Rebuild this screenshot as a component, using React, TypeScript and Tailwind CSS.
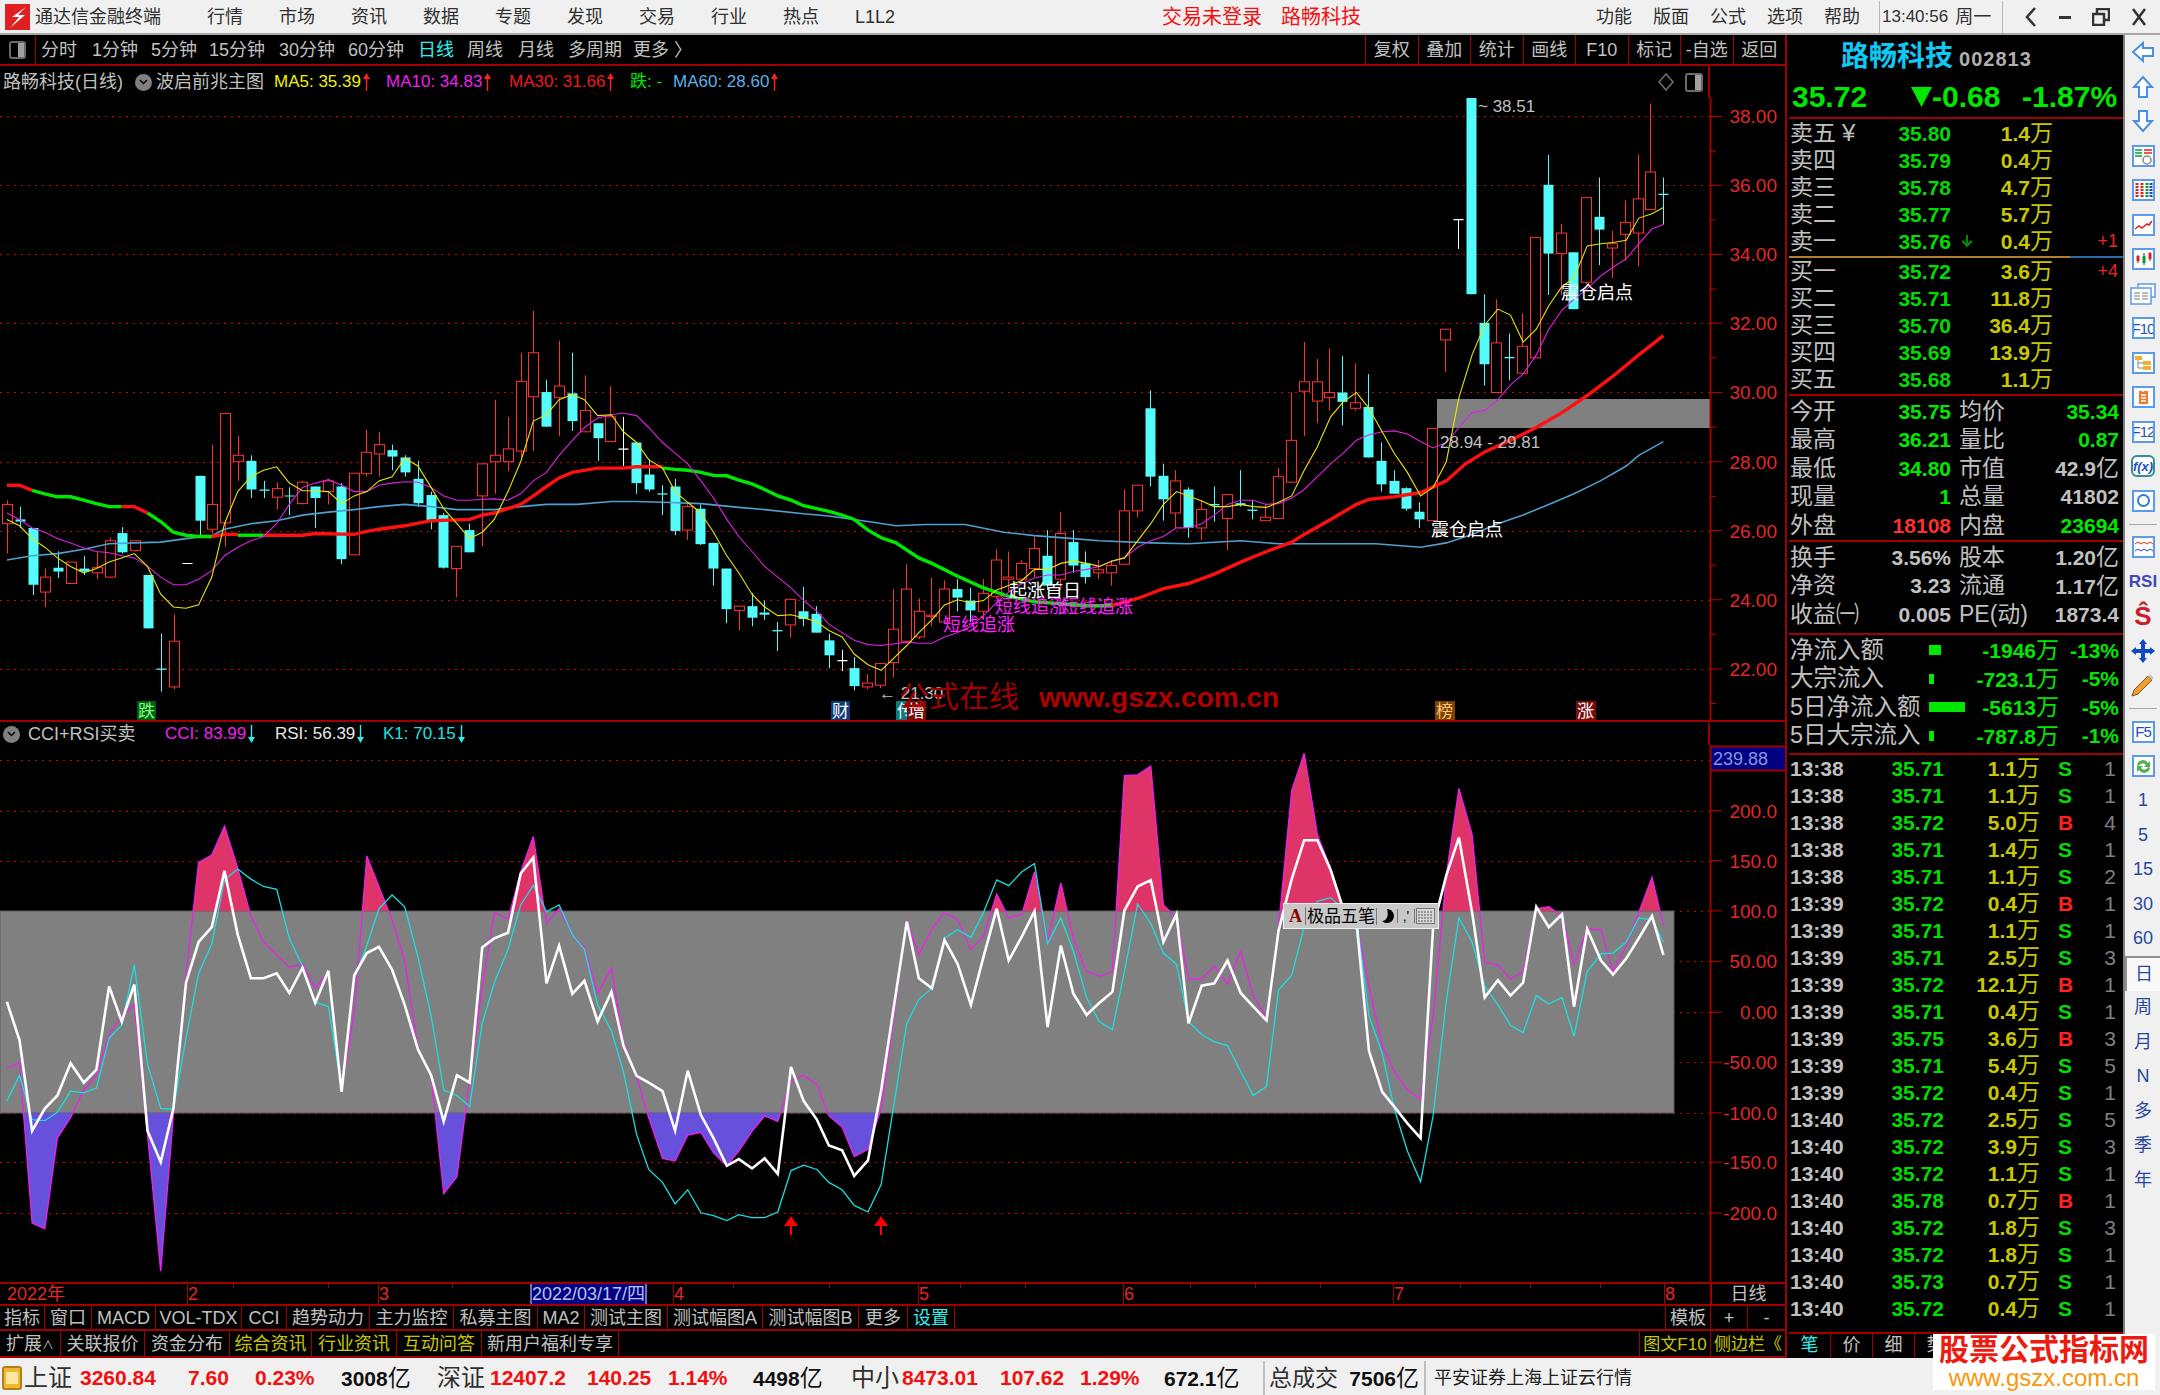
import React from 'react';

type Pt = [number, number];
type Candle = ['c' | 'r' | 'w', number, number, number, number];

// the chart data was read off two crops, so everything goes through these first
const x7 = (x: number) => x / 1.742;
const x8 = (x: number) => 860 + x / 1.668;
const yUp = (y: number) => 60 + y / 2.34;
const yLow = (y: number) => 720 + y / 2.703;
const crisp = (y: number) => Math.round(y) + 0.5;
const join = (a: Pt[], b: Pt[], y: (v: number) => number): Pt[] => [
  ...a.map(([px, py]): Pt => [x7(px), y(py)]).filter((p) => p[0] <= 893),
  ...b.map(([px, py]): Pt => [x8(px), y(py)]).filter((p) => p[0] > 893),
];
const toPoints = (pts: Pt[]) => pts.map((p) => `${p[0].toFixed(1)},${p[1].toFixed(1)}`).join(' ');

const candles: Candle[] = [
  ['r', 1040, 1085, 1030, 1155], ['c', 1075, 1080, 1045, 1095], ['c', 1095, 1228, 1095, 1252], ['r', 1210, 1245, 1190, 1280],
  ['c', 1188, 1197, 1150, 1212], ['r', 1175, 1225, 1175, 1225], ['c', 1190, 1197, 1160, 1205], ['r', 1188, 1200, 1150, 1215],
  ['r', 1125, 1210, 1118, 1212], ['c', 1107, 1152, 1093, 1155], ['r', 1125, 1148, 1125, 1150], ['c', 1205, 1330, 1205, 1330],
  ['c', 1424, 1427, 1342, 1478], ['r', 1360, 1467, 1297, 1472], ['w', 1177, 1179, 1177, 1179], ['c', 973, 1078, 973, 1115],
  ['r', 1040, 1098, 900, 1108], ['r', 827, 1083, 827, 1140], ['r', 925, 940, 880, 985], ['c', 938, 1005, 925, 1025],
  ['c', 1005, 1008, 985, 1025], ['r', 1003, 1023, 988, 1052], ['c', 1019, 1021, 1000, 1065], ['r', 988, 1038, 985, 1040],
  ['c', 998, 1025, 998, 1095], ['r', 985, 1010, 980, 1040], ['c', 998, 1168, 990, 1180], ['r', 967, 1158, 967, 1158],
  ['r', 918, 968, 865, 975], ['r', 900, 922, 870, 975], ['c', 913, 928, 900, 960], ['c', 930, 965, 925, 975],
  ['c', 980, 1037, 938, 1045], ['c', 1018, 1078, 1010, 1098], ['c', 1065, 1188, 1060, 1190], ['r', 1138, 1190, 1138, 1257],
  ['c', 1100, 1152, 1085, 1152], ['r', 945, 1020, 945, 1138], ['r', 925, 940, 795, 1015], ['r', 910, 940, 835, 962],
  ['r', 752, 915, 685, 930], ['r', 685, 788, 587, 915], ['c', 777, 858, 748, 858], ['r', 763, 790, 657, 880],
  ['c', 780, 845, 685, 868], ['r', 820, 870, 738, 870], ['c', 850, 885, 850, 938], ['r', 835, 893, 763, 893],
  ['w', 909, 912, 835, 950], ['c', 895, 990, 895, 1015], ['c', 970, 1005, 935, 1010], ['c', 1014, 1017, 995, 1065],
  ['c', 998, 1102, 980, 1112], ['r', 1045, 1100, 1040, 1123], ['c', 1050, 1133, 1040, 1135], ['c', 1130, 1190, 1130, 1230],
  ['c', 1190, 1285, 1190, 1318], ['r', 1278, 1288, 1278, 1335], ['c', 1278, 1305, 1247, 1325], ['c', 1293, 1298, 1265, 1310],
  ['c', 1334, 1337, 1315, 1383], ['r', 1262, 1322, 1262, 1352], ['c', 1290, 1308, 1233, 1325], ['c', 1296, 1340, 1278, 1340],
  ['c', 1358, 1393, 1342, 1423], ['w', 1404, 1407, 1380, 1430], ['c', 1423, 1465, 1397, 1475], ['r', 1458, 1467, 1437, 1473],
  ['r', 1412, 1463, 1412, 1470], ['r', 1332, 1410, 1238, 1445], ['r', 1238, 1360, 1180, 1365], ['r', 1290, 1350, 1260, 1355],
  ['r', 1299, 1302, 1212, 1325], ['r', 1238, 1315, 1218, 1320], ['c', 1238, 1258, 1215, 1290], ['c', 1265, 1288, 1235, 1315],
  ['r', 1248, 1290, 1215, 1310], ['r', 1170, 1255, 1145, 1260], ['r', 1210, 1215, 1150, 1245], ['r', 1178, 1215, 1170, 1220],
  ['r', 1143, 1190, 1115, 1210], ['c', 1160, 1230, 1100, 1240], ['r', 1108, 1215, 1057, 1240], ['c', 1128, 1183, 1100, 1200],
  ['c', 1178, 1210, 1150, 1225], ['r', 1193, 1200, 1170, 1215], ['r', 1183, 1200, 1170, 1230], ['r', 1055, 1180, 1005, 1182],
  ['r', 995, 1055, 995, 1070], ['c', 815, 975, 773, 998], ['c', 973, 1028, 945, 1078], ['r', 985, 1060, 960, 1095],
  ['c', 1005, 1095, 1000, 1118], ['r', 1052, 1095, 1030, 1123], ['c', 1039, 1042, 998, 1080], ['r', 1017, 1073, 1017, 1147],
  ['c', 1037, 1042, 960, 1045], ['c', 1052, 1055, 1030, 1075], ['r', 1070, 1078, 1040, 1078], ['r', 975, 1073, 955, 1073],
  ['r', 890, 988, 778, 988], ['r', 753, 775, 660, 880], ['r', 753, 798, 700, 850], ['r', 778, 790, 675, 820],
  ['c', 778, 800, 693, 855], ['r', 802, 815, 710, 820], ['c', 812, 930, 735, 930], ['c', 938, 993, 895, 1010],
  ['c', 985, 1015, 960, 1015], ['c', 1002, 1050, 1000, 1055], ['c', 1057, 1075, 1035, 1095], ['r', 862, 1078, 862, 1078],
  ['r', 630, 655, 630, 730], ['w', 372, 375, 372, 442], ['c', 88, 548, 85, 548], ['c', 615, 712, 548, 762],
  ['r', 662, 778, 560, 778], ['c', 695, 698, 640, 750], ['r', 670, 733, 593, 733], ['r', 415, 697, 415, 697],
  ['c', 292, 453, 222, 550], ['r', 405, 453, 383, 550], ['c', 450, 583, 450, 583], ['r', 322, 520, 322, 525],
  ['c', 367, 397, 275, 480], ['r', 430, 440, 400, 510], ['r', 380, 408, 328, 470], ['r', 325, 405, 222, 483],
  ['r', 262, 350, 102, 350], ['c', 313, 316, 275, 385],
];

const ma5 = join(
  [[12,1075],[34,1090],[56,1120],[78,1140],[100,1165],[123,1185],[146,1200],[168,1190],[190,1175],[212,1165],[234,1155],[257,1185],[280,1250],[302,1280],[324,1283],[346,1275],[369,1210],[391,1085],[414,1010],[437,975],[459,960],[482,952],[504,990],[527,1008],[549,1008],[572,1010],[595,1038],[617,1020],[639,1010],[660,985],[683,975],[705,932],[728,950],[751,1000],[773,1050],[796,1085],[818,1120],[840,1105],[861,1075],[885,1010],[907,940],[929,845],[952,830],[974,795],[997,783],[1018,795],[1041,832],[1065,830],[1086,870],[1109,895],[1130,935],[1154,955],[1176,1010],[1198,1035],[1221,1060],[1243,1105],[1266,1160],[1287,1200],[1310,1250],[1332,1280],[1355,1300],[1378,1298],[1400,1305],[1423,1315],[1444,1335],[1467,1350],[1488,1390],[1512,1415],[1535,1428],[1556,1420]],
  [[78,1370],[98,1340],[120,1310],[141,1275],[163,1263],[185,1270],[206,1265],[228,1240],[248,1230],[270,1218],[291,1192],[313,1192],[335,1178],[356,1172],[378,1178],[399,1185],[421,1172],[441,1165],[463,1125],[485,1085],[506,1040],[528,1010],[548,1020],[570,1032],[591,1045],[613,1045],[635,1040],[656,1045],[678,1047],[698,1035],[720,1020],[741,960],[763,905],[785,835],[806,800],[828,778],[849,815],[871,870],[891,920],[913,965],[935,1020],[956,1000],[978,940],[999,790],[1021,690],[1042,620],[1064,583],[1085,597],[1106,660],[1128,630],[1149,575],[1171,530],[1191,510],[1213,435],[1236,430],[1256,427],[1278,422],[1299,370],[1321,360],[1340,345]],
  yUp,
);
const ma10 = join(
  [[12,1060],[34,1075],[56,1095],[78,1105],[100,1120],[123,1130],[146,1142],[168,1150],[190,1153],[212,1160],[234,1165],[257,1185],[280,1210],[302,1228],[324,1228],[346,1215],[369,1195],[391,1160],[414,1140],[437,1125],[459,1115],[482,1085],[504,1040],[527,1000],[549,990],[572,982],[595,995],[617,1010],[639,1010],[660,995],[683,990],[705,987],[728,988],[751,1000],[773,1020],[796,1030],[818,1030],[840,1028],[861,1027],[885,1030],[907,1015],[929,985],[952,965],[974,925],[997,890],[1018,860],[1041,838],[1065,830],[1086,826],[1109,832],[1130,860],[1154,895],[1176,920],[1198,945],[1221,985],[1243,1025],[1266,1075],[1287,1115],[1310,1150],[1332,1185],[1355,1210],[1378,1235],[1400,1265],[1423,1290],[1444,1320],[1467,1340],[1488,1358],[1512,1368],[1535,1370],[1556,1370]],
  [[78,1362],[98,1365],[120,1365],[141,1350],[163,1340],[185,1325],[206,1300],[228,1270],[248,1245],[270,1225],[291,1212],[313,1205],[335,1205],[356,1197],[378,1192],[399,1185],[421,1172],[441,1165],[463,1140],[485,1125],[506,1115],[528,1095],[548,1095],[570,1085],[591,1065],[613,1040],[635,1030],[656,1030],[678,1040],[698,1038],[720,1025],[741,1005],[763,975],[785,945],[806,920],[828,890],[849,877],[871,870],[891,868],[913,875],[935,893],[956,908],[978,895],[999,860],[1021,825],[1042,820],[1064,795],[1085,760],[1106,735],[1128,690],[1149,630],[1171,585],[1191,560],[1213,535],[1236,505],[1256,485],[1278,465],[1299,430],[1321,395],[1340,385]],
  yUp,
);
const ma60 = join(
  [[12,1170],[56,1160],[100,1155],[146,1145],[190,1132],[234,1130],[280,1128],[324,1120],[369,1113],[391,1098],[437,1085],[482,1078],[527,1065],[572,1058],[617,1052],[660,1045],[705,1040],[751,1045],[796,1052],[861,1052],[907,1045],[952,1040],[1005,1040],[1065,1033],[1109,1033],[1154,1035],[1221,1038],[1287,1047],[1332,1052],[1400,1062],[1444,1067],[1512,1080],[1568,1090]],
  [[60,1090],[110,1087],[175,1087],[240,1105],[291,1113],[356,1120],[399,1125],[485,1130],[548,1132],[635,1125],[698,1132],[763,1132],[860,1132],[935,1140],[978,1130],[1021,1110],[1064,1085],[1106,1065],[1149,1040],[1191,1015],[1235,985],[1278,950],[1299,925],[1340,893]],
  yUp,
);

const RED = '#ff1010';
const GREEN = '#00e800';
const ma30: { color: string; pts: Pt[] }[] = [
  { color: RED, pts: join([[12,995],[34,995],[56,1007]], [], yUp) },
  { color: GREEN, pts: join([[56,1007],[78,1015],[100,1022],[123,1022],[146,1030],[168,1038],[190,1045],[212,1045]], [], yUp) },
  { color: RED, pts: join([[212,1045],[234,1045],[257,1060]], [], yUp) },
  { color: GREEN, pts: join([[257,1060],[280,1080],[302,1105],[324,1112],[346,1115],[369,1115]], [], yUp) },
  { color: RED, pts: join([[369,1115],[391,1110],[414,1110]], [], yUp) },
  { color: GREEN, pts: join([[414,1112],[459,1112]], [], yUp) },
  { color: RED, pts: join([[459,1112],[527,1112],[549,1108],[617,1110],[639,1103],[660,1098],[705,1090],[751,1078],[818,1075],[840,1065],[861,1060],[907,1040],[929,1020],[952,998],[974,978],[997,965],[1041,955],[1086,955],[1109,952],[1154,952]], [], yUp) },
  { color: GREEN, pts: join([[1154,955],[1176,958],[1198,960],[1221,965],[1243,972],[1266,973],[1287,983],[1310,992],[1332,1005],[1355,1020],[1378,1030],[1400,1043],[1423,1050],[1444,1056],[1467,1065],[1488,1075],[1512,1100],[1535,1118]], [[60,1130],[98,1165],[120,1178],[163,1208],[206,1235],[248,1255],[291,1268],[335,1272],[378,1277],[420,1277]], yUp) },
  { color: RED, pts: join([], [[420,1277],[463,1260],[506,1237],[548,1225],[591,1203],[635,1175],[678,1150],[720,1128],[741,1110],[785,1075],[828,1040],[849,1028],[891,1022],[935,1012],[978,985],[1010,945],[1042,917],[1085,890],[1128,860],[1171,825],[1213,785],[1256,740],[1299,690],[1340,645]], yUp) },
];

const rsi = join(
  [[12,762],[34,865],[56,1110],[78,1050],[100,1015],[123,928],[146,980],[168,945],[190,720],[212,815],[234,715],[257,1110],[280,1195],[302,1050],[324,710],[346,600],[369,560],[391,408],[414,580],[437,698],[459,698],[482,685],[504,738],[527,670],[549,765],[572,678],[595,1005],[617,690],[639,630],[660,613],[683,675],[705,770],[728,890],[751,960],[773,1085],[796,960],[818,980],[840,615],[861,590],[885,575],[907,415],[929,372],[952,712],[974,610],[997,740],[1018,705],[1041,815],[1065,735],[1086,880],[1109,962],[1130,980],[1154,1003],[1176,1110],[1198,948],[1221,1068],[1243,1130],[1266,1205],[1287,1187],[1310,1212],[1332,1185],[1355,1227],[1378,938],[1400,1030],[1423,1080],[1444,1150],[1467,1163],[1488,1232],[1512,1190],[1535,1000],[1556,740]],
  [[78,545],[98,698],[120,725],[141,595],[163,660],[185,770],[206,640],[228,510],[248,650],[270,585],[291,517],[313,830],[335,610],[356,740],[378,797],[399,765],[421,735],[441,515],[463,450],[485,433],[506,600],[528,525],[548,820],[570,718],[591,712],[613,650],[635,738],[656,775],[678,812],[698,570],[720,430],[741,325],[763,325],[785,405],[806,510],[828,545],[849,895],[871,1005],[891,1045],[913,1090],[935,1130],[956,560],[978,420],[999,318],[1021,520],[1042,750],[1064,703],[1085,745],[1106,710],[1128,505],[1149,560],[1171,525],[1191,775],[1213,565],[1236,650],[1256,688],[1278,645],[1299,590],[1321,530],[1340,635]],
  yLow,
);
const cci = join(
  [[12,942],[34,925],[56,1360],[78,1375],[100,1130],[123,1075],[146,1000],[168,960],[190,850],[212,800],[234,770],[257,1120],[280,1490],[302,1070],[324,690],[346,385],[369,365],[391,287],[414,400],[437,530],[459,600],[482,635],[504,668],[527,660],[549,725],[572,680],[595,1000],[617,790],[639,368],[660,450],[683,540],[705,650],[728,890],[751,960],[773,1280],[796,1235],[818,975],[840,720],[861,520],[885,538],[907,410],[929,315],[952,550],[974,510],[997,580],[1018,615],[1041,740],[1065,670],[1086,870],[1109,965],[1130,1075],[1154,1185],[1176,1192],[1198,1122],[1221,1115],[1243,1170],[1266,1205],[1287,1165],[1310,1112],[1332,1070],[1355,1085],[1378,975],[1400,960],[1423,985],[1444,1070],[1467,1100],[1488,1180],[1512,1160],[1535,1050],[1556,760]],
  [[78,540],[98,635],[120,565],[141,520],[163,540],[185,620],[206,585],[228,470],[248,535],[270,525],[291,410],[313,600],[335,440],[356,590],[378,680],[399,693],[421,680],[441,150],[463,148],[485,125],[506,500],[528,535],[548,700],[570,700],[591,665],[613,715],[635,625],[656,745],[678,805],[698,560],[720,190],[741,90],[763,310],[785,400],[806,510],[828,545],[849,720],[871,880],[891,950],[913,1000],[935,1025],[956,800],[978,420],[999,185],[1021,310],[1042,655],[1064,662],[1085,700],[1106,680],[1128,510],[1149,505],[1171,530],[1191,660],[1213,565],[1236,567],[1256,680],[1278,610],[1299,520],[1321,425],[1340,555]],
  yLow,
);
const k1 = join(
  [[12,1030],[34,960],[56,1080],[78,1083],[100,1060],[123,1003],[146,1008],[168,995],[190,860],[212,825],[234,662],[257,930],[280,1050],[302,1052],[324,860],[346,685],[369,605],[391,432],[414,403],[437,430],[459,450],[482,458],[504,590],[527,665],[549,762],[572,775],[595,995],[617,700],[639,610],[660,510],[683,473],[705,505],[728,640],[751,800],[773,1000],[796,1015],[818,1045],[840,820],[861,710],[885,620],[907,500],[929,447],[952,518],[974,500],[997,580],[1018,620],[1041,770],[1065,840],[1086,950],[1109,1120],[1130,1215],[1154,1250],[1176,1308],[1198,1270],[1221,1332],[1243,1340],[1266,1353],[1287,1337],[1310,1345],[1332,1345],[1355,1330],[1378,1218],[1400,1203],[1423,1215],[1444,1250],[1467,1270],[1488,1312],[1512,1330],[1535,1255],[1556,1000]],
  [[78,820],[98,755],[120,725],[141,590],[163,567],[185,588],[206,520],[228,432],[248,448],[270,410],[291,388],[313,605],[335,535],[356,625],[378,750],[399,815],[421,837],[441,680],[463,498],[485,550],[506,630],[528,660],[548,815],[570,850],[591,870],[613,880],[635,950],[656,1015],[678,990],[698,730],[720,690],[741,560],[763,490],[785,480],[806,510],[828,530],[849,800],[871,900],[891,1050],[913,1165],[935,1248],[956,1070],[978,760],[999,535],[1021,600],[1042,720],[1064,770],[1085,825],[1106,845],[1128,745],[1149,768],[1171,750],[1191,855],[1213,680],[1236,632],[1256,630],[1278,600],[1299,535],[1321,540],[1340,600]],
  yLow,
);

const priceTicks: [string, number][] = [['38.00',132],['36.00',293],['34.00',455],['32.00',616],['30.00',778],['28.00',940],['26.00',1101],['24.00',1263],['22.00',1425]];
const cciTicks: [string, number][] = [['200.0',245],['150.0',380],['100.0',516],['50.00',652],['0.00',790],['-50.00',925],['-100.0',1062],['-150.0',1195],['-200.0',1333]];

const badges: [string, number, number, string, string][] = [
  ['跌', 137, 19, '#005f10', '#7cff7c'],
  ['财', 831, 19, '#103a78', '#ffffff'],
  ['传', 896, 11, '#0c7c7c', '#ffffff'],
  ['增', 907, 19, '#7a0c0c', '#ffffff'],
  ['榜', 1435, 20, '#7a4208', '#ffc070'],
  ['涨', 1576, 20, '#7a0c0c', '#ffffff'],
];

const notes: [string, number, number, string][] = [
  ['起涨首日', 1009, 597, '#ffffff'],
  ['短线追涨', 995, 613, '#ff20ff'],
  ['短线追涨', 1061, 613, '#ff20ff'],
  ['短线追涨', 943, 631, '#ff20ff'],
  ['震仓启点', 1431, 536, '#ffffff'],
  ['震仓启点', 1561, 299, '#ffffff'],
];

function PriceChart() {
  const step = 12.84;
  return (
    <svg className="block w-[1785px] h-[624px]" viewBox="0 98 1785 624">
      {priceTicks.map(([, py]) => (
        <line key={py} x1="0" x2="1710" y1={crisp(yUp(py))} y2={crisp(yUp(py))} stroke="#d00000" strokeDasharray="2 5" />
      ))}
      <rect x="1437" y="399" width="273" height="29" fill="#808080" />
      {candles.map(([kind, top, bot, wt, wb], i) => {
        const x = Math.round(6.9 + i * step) + 0.5;
        const color = kind === 'c' ? '#54fcfc' : kind === 'r' ? '#ff3030' : '#ffffff';
        const y1 = yUp(top);
        const y2 = yUp(bot);
        return (
          <g key={i}>
            <line x1={x} x2={x} y1={yUp(wt)} y2={yUp(wb)} stroke={color} />
            <rect x={x - 5} y={y1} width="10" height={Math.max(y2 - y1, 1)} fill={kind === 'r' ? '#000000' : color} stroke={kind === 'r' ? color : 'none'} />
          </g>
        );
      })}
      <polyline points={toPoints(ma60)} fill="none" stroke="#4f9fcf" strokeWidth="1.6" />
      {ma30.map((s, i) => (
        <polyline key={i} points={toPoints(s.pts)} fill="none" stroke={s.color} strokeWidth="3.4" />
      ))}
      <polyline points={toPoints(ma10)} fill="none" stroke="#e020e0" strokeWidth="1.1" />
      <polyline points={toPoints(ma5)} fill="none" stroke="#e8e800" strokeWidth="1.1" />

      {notes.map(([t, x, y, color], i) => (
        <text key={i} x={x} y={y} fontSize="18" fill={color}>{t}</text>
      ))}
      <text x="1478" y="112" fontSize="17" fill="#c0c0c0">~ 38.51</text>
      <text x="1440" y="448" fontSize="17" fill="#c0c0c0">28.94 - 29.81</text>
      <text x="879" y="699" fontSize="17" fill="#c0c0c0">← 21.30</text>

      {badges.map(([t, x, w, bg, fg]) => (
        <g key={x}>
          <rect x={x} y="701" width={w} height="19" fill={bg} />
          <text x={x + 1} y="717" fontSize="17" fill={fg}>{t}</text>
        </g>
      ))}
      <text x="899" y="707" fontSize="30" fill="#a00000">公式在线</text>
      <text x="1039" y="707" fontSize="28" fontWeight="700" fill="#b00000">www.gszx.com.cn</text>

      <line x1="1710.5" x2="1710.5" y1="98" y2="722" stroke="#a00000" strokeWidth="2" />
      {priceTicks.map(([t, py]) => (
        <g key={t}>
          <line x1="1710" x2="1722" y1={yUp(py)} y2={yUp(py)} stroke="#c00000" />
          <line x1="1710" x2="1716" y1={yUp(py + 81)} y2={yUp(py + 81)} stroke="#c00000" />
          <text x="1777" y={yUp(py) + 7} fontSize="19" textAnchor="end" fill="#e02828">{t}</text>
        </g>
      ))}
    </svg>
  );
}

function IndicatorChart() {
  const pink = `${toPoints(cci)} ${cci[cci.length - 1][0]},911 ${cci[0][0]},911`;
  const violet = `${toPoints(cci)} ${cci[cci.length - 1][0]},1113 ${cci[0][0]},1113`;
  return (
    <svg className="block w-[1785px] h-[537px]" viewBox="0 745 1785 537">
      <defs>
        <clipPath id="overBought"><rect x="0" y="745" width="1710" height="166" /></clipPath>
        <clipPath id="overSold"><rect x="0" y="1113" width="1710" height="169" /></clipPath>
      </defs>
      {[108, ...cciTicks.map((t) => t[1])].map((py) => (
        <line key={py} x1="0" x2="1710" y1={crisp(yLow(py))} y2={crisp(yLow(py))} stroke="#d00000" strokeDasharray="2 5" />
      ))}
      <rect x="0" y="911" width="1674" height="202" fill="#808080" stroke="#5c5c5c" />
      <polygon points={pink} fill="#df3468" clipPath="url(#overBought)" />
      <polygon points={violet} fill="#6650dc" clipPath="url(#overSold)" />
      <polyline points={toPoints(cci)} fill="none" stroke="#ee20ee" strokeWidth="1.3" />
      <polyline points={toPoints(k1)} fill="none" stroke="#18e0e0" strokeWidth="1.3" />
      <polyline points={toPoints(rsi)} fill="none" stroke="#ffffff" strokeWidth="2.6" />
      {[791, 881].map((x) => (
        <g key={x}>
          <polygon points={`${x},1216 ${x - 7},1226 ${x + 7},1226`} fill="#ff0000" />
          <rect x={x - 1} y="1225" width="2" height="10" fill="#ff0000" />
        </g>
      ))}
      <rect x="1711" y="747" width="74" height="23" fill="#000080" />
      <text x="1713" y="765" fontSize="18" fill="#8098e0">239.88</text>
      <line x1="1710" x2="1785" y1="746.5" y2="746.5" stroke="#a00000" strokeWidth="2" />
      <line x1="1710" x2="1785" y1="770.5" y2="770.5" stroke="#a00000" strokeWidth="2" />
      <line x1="1710.5" x2="1710.5" y1="745" y2="1282" stroke="#a00000" strokeWidth="2" />
      {cciTicks.map(([t, py]) => (
        <g key={t}>
          <line x1="1710" x2="1722" y1={yLow(py)} y2={yLow(py)} stroke="#c00000" />
          <text x="1777" y={yLow(py) + 7} fontSize="19" textAnchor="end" fill="#e02828">{t}</text>
        </g>
      ))}
    </svg>
  );
}

function ImeBar() {
  return (
    <div className="absolute left-[1283px] top-[181px] w-[156px] h-[26px] bg-[#c8c8c8] border border-[#efefef] flex items-center gap-[1px] px-[2px] text-black">
      <span className="w-[20px] text-center text-[18px] leading-none font-['Liberation_Serif',serif] font-bold text-[#8a0000] border-r border-[#777]">A</span>
      <span className="w-[70px] text-[17px] leading-none whitespace-nowrap border-r border-[#777]">极品五笔</span>
      <svg className="w-[18px] h-[18px]" viewBox="0 0 18 18"><path d="M9 2a7 7 0 1 1-5 12c5 0 7-6 5-12z" fill="#000" /></svg>
      <span className="w-[18px] text-center text-[14px] leading-none border-x border-[#777]">,'</span>
      <svg className="w-[19px] h-[16px]" viewBox="0 0 19 16">
        <rect x="0.5" y="0.5" width="18" height="15" fill="#d8d8d8" stroke="#777" />
        <path d="M2 4h15M2 7h15M2 10h15M2 13h15" stroke="#555" strokeDasharray="2 1" />
      </svg>
    </div>
  );
}

function Titlebar() {
  const menu = ['行情', '市场', '资讯', '数据', '专题', '发现', '交易', '行业', '热点', 'L1L2'];
  const right = ['功能', '版面', '公式', '选项', '帮助'];
  return (
    <div className="h-[35px] shrink-0 bg-[#f0f0f0] border-b-2 border-[#a8a8a8] flex items-center pt-[1px] text-[18px] text-[#303030]">
      <svg className="ml-[5px] w-[25px] h-[26px] shrink-0" viewBox="0 0 25 26">
        <rect width="25" height="26" fill="#e02020" />
        <path d="M21 3 7 13h7L5 24l15-13h-7z" fill="#ffffff" />
      </svg>
      <span className="ml-[5px] w-[126px] whitespace-nowrap">通达信金融终端</span>
      <div className="ml-[46px] flex gap-[36px]">
        {menu.map((m) => <span key={m} className="w-[36px] whitespace-nowrap">{m}</span>)}
      </div>
      <div className="ml-[271px] flex gap-[19px] text-[20px] leading-none text-[#f01010]">
        <span className="whitespace-nowrap">交易未登录</span>
        <span className="whitespace-nowrap">路畅科技</span>
      </div>
      <div className="ml-[235px] flex gap-[21px]">
        {right.map((m) => <span key={m} className="w-[36px] whitespace-nowrap">{m}</span>)}
      </div>
      <div className="ml-[19px] h-full w-[124px] border-x border-[#b8b8b8] flex items-center pl-[2px] gap-[7px] whitespace-nowrap">
        <span className="text-[17px]">13:40:56</span>
        <span>周一</span>
      </div>
      <div className="flex-1 flex items-center justify-around pl-[10px] pr-[2px]">
        <svg className="w-[14px] h-[22px]" viewBox="0 0 14 22"><path d="M11 2 3 11l8 9" fill="none" stroke="#333" strokeWidth="2.5" /></svg>
        <span className="w-[12px] h-[3px] bg-[#333]" />
        <svg className="w-[18px] h-[18px]" viewBox="0 0 18 18"><path d="M5 5V1h12v11h-4M1 6h11v11H1z" fill="none" stroke="#333" strokeWidth="2.5" /></svg>
        <svg className="w-[16px] h-[18px]" viewBox="0 0 16 18"><path d="m2 1 12 16M14 1 2 17" stroke="#333" strokeWidth="2.5" /></svg>
      </div>
    </div>
  );
}

function Toolbar() {
  const periods: [string, string][] = [
    ['分时', 'w-[51px]'], ['1分钟', 'w-[59px]'], ['5分钟', 'w-[58px]'], ['15分钟', 'w-[70px]'], ['30分钟', 'w-[69px]'], ['60分钟', 'w-[70px]'],
    ['日线', 'w-[49px]'], ['周线', 'w-[51px]'], ['月线', 'w-[50px]'], ['多周期', 'w-[65px]'], ['更多 〉', 'w-[70px]'],
  ];
  const tools = ['复权', '叠加', '统计', '画线', 'F10', '标记', '-自选', '返回'];
  return (
    <div className="h-[31px] shrink-0 flex bg-black border-b-2 border-[#a00000] text-[18px] text-[#c0c0c0]">
      <div className="w-[36px] border-r border-[#a00000] flex items-center justify-center">
        <span className="w-[17px] h-[18px] rounded-[3px] border-2 border-[#6a6a6a] flex justify-end">
          <span className="w-[6px] bg-[#a0a0a0]" />
        </span>
      </div>
      <div className="pl-[5px] pt-[2px] flex items-center">
        {periods.map(([p, w]) => (
          <span key={p} className={`${w} whitespace-nowrap ${p === '日线' ? 'text-[#30f0f0]' : ''}`}>{p}</span>
        ))}
      </div>
      <div className="ml-auto flex">
        {tools.map((t) => (
          <span key={t} className="w-[52.5px] border-l border-[#a00000] pt-[2px] flex items-center justify-center whitespace-nowrap">{t}</span>
        ))}
      </div>
    </div>
  );
}

function Collapse() {
  return (
    <span className="w-[17px] h-[17px] rounded-full bg-[#808080] flex items-center justify-center shrink-0">
      <svg className="w-[9px] h-[6px]" viewBox="0 0 9 6"><path d="m1 1 3.500 3.500L8 1" fill="none" stroke="#000" strokeWidth="1.500" /></svg>
    </span>
  );
}

function UpArrow() {
  return (
    <svg className="w-[9px] h-[20px] shrink-0" viewBox="0 0 9 20">
      <path d="M4.500 1 8 7H5.200v12H3.800V7H1z" fill="#ff2020" />
    </svg>
  );
}

function DownArrow() {
  return (
    <svg className="w-[9px] h-[20px] shrink-0" viewBox="0 0 9 20">
      <path d="M4.500 19 8 13H5.200V1H3.800v12H1z" fill="#30e8f0" />
    </svg>
  );
}

function PriceHeader() {
  return (
    <div className="h-[32px] shrink-0 flex items-center text-[17px] whitespace-nowrap">
      <span className="pl-[3px] w-[135px] text-[18px] text-[#c0c0c0]">路畅科技(日线)</span>
      <Collapse />
      <span className="ml-[4px] w-[118px] text-[18px] text-[#c0c0c0]">波启前兆主图</span>
      <span className="w-[100px] flex items-center text-[#f0f000] gap-[1px]">MA5: 35.39<UpArrow /></span>
      <span className="ml-[12px] w-[111px] flex items-center text-[#f020f0] gap-[1px]">MA10: 34.83<UpArrow /></span>
      <span className="ml-[12px] w-[111px] flex items-center text-[#f01818] gap-[1px]">MA30: 31.66<UpArrow /></span>
      <span className="ml-[10px] w-[43px] text-[#00e800]">跌: -</span>
      <span className="w-[110px] flex items-center text-[#5ab0e8] gap-[1px]">MA60: 28.60<UpArrow /></span>
      <div className="ml-auto flex items-center">
        <svg className="w-[16px] h-[18px]" viewBox="0 0 16 18"><path d="M8 1 15 9 8 17 1 9z" fill="none" stroke="#707070" strokeWidth="1.500" /></svg>
        <span className="ml-[11px] w-[18px] h-[19px] rounded-[3px] border-2 border-[#6a6a6a] flex justify-end">
          <span className="w-[6px] bg-[#a0a0a0]" />
        </span>
        <span className="ml-[5px] w-[77px] h-[32px] border-l-2 border-[#a00000]" />
      </div>
    </div>
  );
}

function IndicatorHeader() {
  return (
    <div className="h-[23px] shrink-0 flex items-center pt-[1px] text-[17px] whitespace-nowrap">
      <span className="ml-[3px]"><Collapse /></span>
      <span className="ml-[8px] w-[117px] text-[18px] text-[#c0c0c0]">CCI+RSI买卖</span>
      <span className="ml-[20px] w-[99px] flex items-center text-[#f020f0] gap-[1px]">CCI: 83.99<DownArrow /></span>
      <span className="ml-[11px] w-[95px] flex items-center text-[#e8e8e8] gap-[1px]">RSI: 56.39<DownArrow /></span>
      <span className="ml-[13px] w-[88px] flex items-center text-[#20e0e0] gap-[1px]">K1: 70.15<DownArrow /></span>
      <span className="ml-auto mr-[75px] w-[2px] h-full bg-[#a00000]" />
    </div>
  );
}

function DateAxis() {
  const cells: [string, string, string][] = [
    ['2022年', 'w-[187px]', ''], ['2', 'w-[191px]', ''], ['3', 'w-[152px]', ''],
    ['2022/03/17/四', 'w-[117px]', 'bg-[#000080] text-[#b8c4f0] border-x-2 border-[#7070c0]'], ['', 'w-[26px]', ''],
    ['4', 'w-[245px]', ''], ['5', 'w-[205px]', ''], ['6', 'w-[270px]', ''], ['7', 'w-[271px]', ''], ['8', 'w-[46px]', ''],
  ];
  const ticks = [233, 328, 452, 733, 829, 960, 1025, 1190, 1255, 1320, 1460, 1530, 1600];
  return (
    <div className="relative h-[24px] shrink-0 flex border-y-2 border-[#a00000] text-[18px] leading-[21px] text-[#e02828] whitespace-nowrap">
      {cells.map(([t, w, extra], i) => (
        <span key={i} className={`${w} ${i > 0 && i !== 3 && i !== 4 ? 'border-l border-[#a00000]' : ''} ${i === 0 ? 'pl-[7px]' : ''} ${extra}`}>{t}</span>
      ))}
      <span className="w-[75px] border-l-2 border-[#a00000] text-center text-[#c0c0c0]">日线</span>
      {ticks.map((x) => (
        <span key={x} style={{ left: x }} className="absolute top-0 w-[1px] h-[4px] bg-[#a00000]" />
      ))}
    </div>
  );
}

function TabRows() {
  const first: [string, string][] = [
    ['指标', 'w-[45px]'], ['窗口', 'w-[47px]'], ['MACD', 'w-[64px]'], ['VOL-TDX', 'w-[86px]'], ['CCI', 'w-[45px]'], ['趋势动力', 'w-[83px]'], ['主力监控', 'w-[84px]'],
    ['私募主图', 'w-[84px]'], ['MA2', 'w-[47px]'], ['测试主图', 'w-[83px]'], ['测试幅图A', 'w-[95px]'], ['测试幅图B', 'w-[96px]'], ['更多', 'w-[49px]'], ['设置', 'w-[47px]'],
  ];
  const second: [string, string][] = [
    ['关联报价', 'w-[84px]'], ['资金分布', 'w-[85px]'], ['综合资讯', 'w-[82px]'], ['行业资讯', 'w-[85px]'], ['互动问答', 'w-[85px]'], ['新用户福利专享', 'w-[137px]'],
  ];
  return (
    <>
      <div className="h-[25px] shrink-0 flex items-stretch border-b-2 border-[#a00000] text-[18px] leading-[24px] text-[#c0c0c0] whitespace-nowrap">
        {first.map(([t, w]) => (
          <span key={t} className={`${w} border-r border-[#a00000] text-center ${t === '设置' ? 'text-[#30f0f0]' : ''}`}>{t}</span>
        ))}
        <span className="ml-auto w-[46px] border-x border-[#a00000] text-center">模板</span>
        <span className="w-[37px] border-r border-[#a00000] text-center">+</span>
        <span className="w-[37px] text-center">-</span>
      </div>
      <div className="h-[27px] shrink-0 flex items-stretch border-b-2 border-[#a00000] text-[18px] leading-[27px] text-[#c0c0c0] whitespace-nowrap">
        <span className="w-[61px] border-r border-[#a00000] text-center">扩展<span className="text-[12px]">∧</span></span>
        {second.map(([t, w]) => (
          <span key={t} className={`${w} border-r border-[#a00000] text-center ${t.endsWith('资讯') || t === '互动问答' ? 'text-[#c8c800]' : ''}`}>{t}</span>
        ))}
        <span className="ml-auto w-[72px] border-x border-[#a00000] text-center text-[17px] text-[#c8c800]">图文F10</span>
        <span className="w-[74px] text-center text-[17px] text-[#c8c800]">侧边栏《</span>
      </div>
    </>
  );
}

// number plus its 万 / 亿, which the terminal draws larger and not bold
function Num({ v }: { v: string }) {
  const unit = /[万亿]$/.test(v) ? v.slice(-1) : '';
  return (
    <>
      {unit ? v.slice(0, -1) : v}
      {unit && <span className="text-[23px] font-normal">{unit}</span>}
    </>
  );
}

const asks: [string, string, string, string, boolean][] = [
  ['卖五', '35.80', '1.4', '', false], ['卖四', '35.79', '0.4', '', false], ['卖三', '35.78', '4.7', '', false], ['卖二', '35.77', '5.7', '', false], ['卖一', '35.76', '0.4', '+1', true],
];
const bids: [string, string, string, string, boolean][] = [
  ['买一', '35.72', '3.6', '+4', false], ['买二', '35.71', '11.8', '', false], ['买三', '35.70', '36.4', '', false], ['买四', '35.69', '13.9', '', false], ['买五', '35.68', '1.1', '', false],
];

function QuoteRow({ label, price, vol, diff, down }: { label: string; price: string; vol: string; diff: string; down: boolean }) {
  return (
    <div className="h-[27px] flex items-center">
      <span className="relative w-[80px] text-[23px] leading-none text-[#c0c0c0]">
        {label}
        {label === '卖五' && <span className="absolute left-[52px] top-[-1px] text-[24px] font-light text-[#c0c0c0]">¥</span>}
      </span>
      <span className="w-[81px] text-right text-[21px] font-bold text-[#00dc00]">{price}</span>
      <span className="w-[22px] flex justify-end">
        {down && (
          <svg className="w-[12px] h-[13px]" viewBox="0 0 12 13"><path d="M5 0h2v8l3-3 1.500 1.500L6 12.500.500 6.500 2 5l3 3z" fill="#008c00" /></svg>
        )}
      </span>
      <span className="w-[80px] text-right text-[21px] font-bold text-[#c8c800] whitespace-nowrap"><Num v={`${vol}万`} /></span>
      <span className="w-[65px] text-right text-[18px] text-[#e02828]">{diff}</span>
    </div>
  );
}

const stats: [string, string, string, string, string, string][] = [
  ['今开', '35.75', 'text-[#00e800]', '均价', '35.34', 'text-[#00e800]'],
  ['最高', '36.21', 'text-[#00e800]', '量比', '0.87', 'text-[#00e800]'],
  ['最低', '34.80', 'text-[#00e800]', '市值', '42.9亿', 'text-[#c0c0c0]'],
  ['现量', '1', 'text-[#00e800]', '总量', '41802', 'text-[#c0c0c0]'],
  ['外盘', '18108', 'text-[#ff3030]', '内盘', '23694', 'text-[#00e800]'],
];
const stats2: [string, string, string, string, string, string][] = [
  ['换手', '3.56%', 'text-[#c0c0c0]', '股本', '1.20亿', 'text-[#c0c0c0]'],
  ['净资', '3.23', 'text-[#c0c0c0]', '流通', '1.17亿', 'text-[#c0c0c0]'],
  ['收益㈠', '0.005', 'text-[#c0c0c0]', 'PE(动)', '1873.4', 'text-[#c0c0c0]'],
];

function StatRow({ row }: { row: [string, string, string, string, string, string] }) {
  const [a, av, ac, b, bv, bc] = row;
  return (
    <div className="h-[28.5px] flex items-center whitespace-nowrap">
      <span className="w-[80px] text-[23px] leading-none text-[#c0c0c0]">{a}</span>
      <span className={`w-[81px] text-right text-[21px] font-bold ${ac}`}>{av}</span>
      <span className="ml-[8px] w-[72px] text-[23px] leading-none text-[#c0c0c0]">{b}</span>
      <span className={`w-[88px] text-right text-[21px] font-bold ${bc}`}><Num v={bv} /></span>
    </div>
  );
}

const flows: [string, string, string, string][] = [
  ['净流入额', 'w-[12px]', '-1946万', '-13%'],
  ['大宗流入', 'w-[5px]', '-723.1万', '-5%'],
  ['5日净流入额', 'w-[36px]', '-5613万', '-5%'],
  ['5日大宗流入', 'w-[5px]', '-787.8万', '-1%'],
];

const trades: [string, string, string, 'S' | 'B', string][] = [
  ['13:38','35.71','1.1','S','1'],['13:38','35.71','1.1','S','1'],['13:38','35.72','5.0','B','4'],['13:38','35.71','1.4','S','1'],['13:38','35.71','1.1','S','2'],
  ['13:39','35.72','0.4','B','1'],['13:39','35.71','1.1','S','1'],['13:39','35.71','2.5','S','3'],['13:39','35.72','12.1','B','1'],['13:39','35.71','0.4','S','1'],
  ['13:39','35.75','3.6','B','3'],['13:39','35.71','5.4','S','5'],['13:39','35.72','0.4','S','1'],['13:40','35.72','2.5','S','5'],['13:40','35.72','3.9','S','3'],
  ['13:40','35.72','1.1','S','1'],['13:40','35.78','0.7','B','1'],['13:40','35.72','1.8','S','3'],['13:40','35.72','1.8','S','1'],['13:40','35.73','0.7','S','1'],['13:40','35.72','0.4','S','1'],
];

function QuotePanel() {
  return (
    <div className="w-[336px] shrink-0 bg-black flex flex-col pl-[2px] overflow-hidden">
      <div className="h-[41px] shrink-0 flex items-center pt-[2px] whitespace-nowrap">
        <span className="ml-[52px] text-[28px] font-bold leading-none text-[#10c8f4]">路畅科技</span>
        <span className="ml-[6px] mt-[5px] text-[20px] font-bold tracking-[1px] text-[#b0b0b0]">002813</span>
      </div>
      <div className="h-[43px] shrink-0 flex items-center border-b-2 border-[#a00000] pl-[3px] text-[30px] font-bold text-[#00e800] whitespace-nowrap">
        <span className="w-[119px]">35.72</span>
        <span className="w-[111px] flex items-center">
          <svg className="w-[21px] h-[20px]" viewBox="0 0 21 20"><path d="M0 0h21L10.500 20z" fill="#00e800" /></svg>-0.68
        </span>
        <span>-1.87%</span>
      </div>
      <div className="h-[137px] shrink-0 pl-[1px] pt-[1px]">
        {asks.map(([l, p, v, d, dn]) => <QuoteRow key={l} label={l} price={p} vol={v} diff={d} down={dn} />)}
      </div>
      <div className="h-[2px] shrink-0 flex">
        <span className="w-[281px] bg-[#b08030]" />
        <span className="flex-1 bg-[#2a6ca8]" />
      </div>
      <div className="h-[138px] shrink-0 pl-[1px] border-b-2 border-[#a00000]">
        {bids.map(([l, p, v, d, dn]) => <QuoteRow key={l} label={l} price={p} vol={v} diff={d} down={dn} />)}
      </div>
      <div className="h-[146px] shrink-0 pl-[1px] pt-[1px] border-b-2 border-[#a00000]">
        {stats.map((r) => <StatRow key={r[0]} row={r} />)}
      </div>
      <div className="h-[93px] shrink-0 pl-[1px] pt-[1px] border-b-2 border-[#a00000]">
        {stats2.map((r) => <StatRow key={r[0]} row={r} />)}
      </div>
      <div className="h-[120px] shrink-0 pl-[1px] pt-[1px] border-b-2 border-[#a00000]">
        {flows.map(([l, w, v, p]) => (
          <div key={l} className="h-[28.5px] flex items-center whitespace-nowrap">
            <span className="w-[139px] text-[23.5px] leading-none text-[#c0c0c0]">{l}</span>
            <span className="w-[36px]"><span className={`block ${w} h-[10px] bg-[#00e800]`} /></span>
            <span className="w-[94px] text-right text-[21px] font-bold text-[#00e800]"><Num v={v} /></span>
            <span className="w-[60px] text-right text-[21px] font-bold text-[#00e800]">{p}</span>
          </div>
        ))}
      </div>
      <div className="flex-1 pl-[1px]">
        {trades.map(([t, p, v, s, n], i) => (
          <div key={i} className="h-[27px] flex items-center text-[21px] font-bold whitespace-nowrap">
            <span className="w-[60px] text-[#c0c0c0]">{t}</span>
            <span className="w-[94px] text-right text-[#00dc00]">{p}</span>
            <span className="w-[96px] text-right text-[#c8c800]"><Num v={`${v}万`} /></span>
            <span className={`ml-[18px] w-[20px] ${s === 'S' ? 'text-[#00dc00]' : 'text-[#ff2020]'}`}>{s}</span>
            <span className="w-[38px] text-right font-normal text-[#808080]">{n}</span>
          </div>
        ))}
      </div>
      <div className="h-[26px] shrink-0 flex border-t-2 border-[#a00000] text-[18px] leading-[22px] text-[#c0c0c0]">
        {['笔', '价', '细', '势', '联', '值'].map((t, i) => (
          <span key={t} className={`w-[42px] text-center border-r border-[#a00000] ${i === 0 ? 'text-[#30f0f0]' : ''}`}>{t}</span>
        ))}
      </div>
    </div>
  );
}

function Frame({ children }: { children: React.ReactNode }) {
  return (
    <span className="w-[23px] h-[22px] bg-white border-2 border-[#5a9bea] flex items-center justify-center overflow-hidden">{children}</span>
  );
}

function Arrow({ rotate }: { rotate: string }) {
  return (
    <svg className={`w-[24px] h-[24px] ${rotate}`} viewBox="0 0 24 24">
      <path d="M12 2 21 12H16V22H8V12H3z" fill="#ffffff" stroke="#4a90e2" strokeWidth="2" />
    </svg>
  );
}

function SideBar() {
  const icons: React.ReactNode[] = [
    <Arrow key="l" rotate="-rotate-90" />,
    <Arrow key="u" rotate="" />,
    <Arrow key="d" rotate="rotate-180" />,
    <Frame key="a"><svg className="w-[19px] h-[18px]" viewBox="0 0 19 18"><path d="M1 3h7M1 6h7M1 9h7" stroke="#00a030" strokeWidth="1.500" /><path d="M10 3h8M10 6h8" stroke="#e02020" strokeWidth="1.500" /><circle cx="13" cy="13" r="4" fill="none" stroke="#888" strokeWidth="1.500" /></svg></Frame>,
    <Frame key="b"><svg className="w-[19px] h-[18px]" viewBox="0 0 19 18"><path d="M3 2v14M8 2v14" stroke="#e02020" strokeWidth="3" strokeDasharray="2 1" /><path d="M13 2v14" stroke="#00a030" strokeWidth="3" strokeDasharray="2 1" /><path d="M17 2v14" stroke="#2040e0" strokeWidth="3" strokeDasharray="2 1" /></svg></Frame>,
    <Frame key="c"><svg className="w-[19px] h-[18px]" viewBox="0 0 19 18"><path d="m1 13 4-3 3 2 5-4 2 1 3-4" fill="none" stroke="#e02020" strokeWidth="1.500" /></svg></Frame>,
    <Frame key="d"><svg className="w-[19px] h-[18px]" viewBox="0 0 19 18"><path d="M4 5v8M10 3v12M16 2v9" stroke="#303030" /><rect x="2.500" y="6" width="3" height="5" fill="#e02020" /><rect x="8.500" y="6" width="3" height="7" fill="#00a030" /><rect x="14.500" y="3" width="3" height="6" fill="#e02020" /></svg></Frame>,
    <svg key="e" className="w-[26px] h-[22px]" viewBox="0 0 26 22"><path d="M8 4V1h17v13h-4" fill="#fff" stroke="#5a9bea" strokeWidth="1.500" /><rect x="1" y="5" width="20" height="16" fill="#fff" stroke="#5a9bea" strokeWidth="1.500" /><path d="M4 10h6M12 10h6M4 13h6M12 13h6M4 16h6M12 16h6" stroke="#777" /></svg>,
    <Frame key="f"><span className="text-[15px] leading-none text-[#2050c0] tracking-[-1px]">F10</span></Frame>,
    <Frame key="g"><svg className="w-[19px] h-[18px]" viewBox="0 0 19 18"><path d="M4 5v9h5M4 9h5" stroke="#888" fill="none" /><rect x="1" y="2" width="7" height="4" fill="#f0b030" /><rect x="9" y="7" width="8" height="4" fill="#f0b030" /><rect x="9" y="12" width="8" height="4" fill="#f0b030" /></svg></Frame>,
    <Frame key="h"><svg className="w-[19px] h-[18px]" viewBox="0 0 19 18"><path d="M5 3h9v13H5z" fill="#f07830" /><path d="M9 1v3M7 7h5M7 10h5M7 13h5" stroke="#fff" strokeWidth="1.500" /></svg></Frame>,
    <Frame key="i"><span className="text-[15px] leading-none text-[#2050c0] tracking-[-1px]">F12</span></Frame>,
    <span key="j" className="w-[24px] h-[22px] bg-white border-2 border-[#309090] rounded-[6px] flex items-center justify-center text-[13px] italic leading-none font-bold text-[#2050c0]">f(x)</span>,
    <Frame key="k"><span className="w-[13px] h-[13px] rounded-full border-2 border-[#2c7cd0]" /></Frame>,
    'sep',
    <Frame key="l2"><svg className="w-[19px] h-[18px]" viewBox="0 0 19 18"><path d="m1 6 3-2 3 2 3-2 3 2 3-2 3 2" fill="none" stroke="#e02020" /><path d="m1 13 3-2 3 2 3-2 3 2 3-2 3 2" fill="none" stroke="#2040e0" /></svg></Frame>,
    <span key="m" className="text-[17px] font-bold leading-none text-[#4048b8]">RSI</span>,
    <span key="n" className="text-[26px] font-bold leading-none text-[#c82028]">Ŝ</span>,
    <svg key="o" className="w-[26px] h-[26px]" viewBox="0 0 26 26"><path d="M13 1 17 6H15V11H20V9L25 13 20 17V15H15V20H17L13 25 9 20H11V15H6V17L1 13 6 9V11H11V6H9z" fill="#1048c8" /></svg>,
    <svg key="p" className="w-[26px] h-[26px]" viewBox="0 0 26 26"><path d="M4 18 18 4l4 4L8 22l-6 2z" fill="#f0a030" stroke="#805020" /><path d="m18 4 2-2 4 4-2 2z" fill="#c8c8c8" /></svg>,
    'sep',
    <Frame key="q"><span className="text-[15px] leading-none text-[#2050c0] tracking-[-1px]">F5</span></Frame>,
    <Frame key="r"><svg className="w-[19px] h-[18px]" viewBox="0 0 19 18"><path d="M3 8a6 6 0 0 1 11-2l2-2v6h-6l2-2a4 4 0 0 0-7 1zM16 11a6 6 0 0 1-11 2l-2 2V9h6l-2 2a4 4 0 0 0 7-1z" fill="#50b050" /></svg></Frame>,
  ];
  const periods = ['1', '5', '15', '30', '60', '日', '周', '月', 'N', '多', '季', '年'];
  return (
    <div className="w-[38px] shrink-0 bg-[#f0f0f0] border-l-2 border-[#808080] flex flex-col items-center overflow-hidden">
      {icons.map((icon, i) =>
        icon === 'sep' ? (
          <span key={i} className="shrink-0 my-[5.5px] w-[28px] h-[1px] bg-[#a8a8a8]" />
        ) : (
          <span key={i} className="shrink-0 h-[34.5px] flex items-center justify-center">{icon}</span>
        ),
      )}
      {periods.map((p) => (
        <span key={p} className={`shrink-0 w-full h-[34.5px] flex items-center justify-center text-[18px] text-[#2848a0] ${p === '日' ? 'bg-[#f8f8f8] border-l-2 border-t-2 border-[#909090]' : ''}`}>{p}</span>
      ))}
    </div>
  );
}

function StatusBar() {
  const cells: [string, string, string][] = [
    ['上证', 'w-[56px] text-[24px] text-[#303030]', ''],
    ['3260.84', 'w-[108px]', 'r'], ['7.60', 'w-[67px]', 'r'], ['0.23%', 'w-[86px]', 'r'], ['3008亿', 'w-[96px]', 'k'],
    ['深证', 'w-[53px] text-[24px] text-[#303030]', ''],
    ['12407.2', 'w-[97px]', 'r'], ['140.25', 'w-[81px]', 'r'], ['1.14%', 'w-[85px]', 'r'], ['4498亿', 'w-[98px]', 'k'],
    ['中小', 'w-[51px] text-[24px] text-[#303030]', ''],
    ['8473.01', 'w-[98px]', 'r'], ['107.62', 'w-[80px]', 'r'], ['1.29%', 'w-[84px]', 'r'], ['672.1亿', 'w-[99px]', 'k'],
  ];
  return (
    <div className="relative h-[37px] shrink-0 bg-[#f0f0f0] flex items-center pt-[3px] whitespace-nowrap">
      <span className="ml-[2px] mr-[2px] w-[20px] h-[24px] rounded-[3px] bg-[#f0b830] border-2 border-[#b08020] flex items-center justify-center">
        <span className="w-[12px] h-[12px] bg-[#ffe8a0]" />
      </span>
      {cells.map(([t, w, kind], i) => (
        <span key={i} className={`${w} ${kind === 'r' ? 'text-[21px] font-bold text-[#f01010]' : kind === 'k' ? 'text-[21px] font-bold text-[#101010]' : ''}`}><Num v={t} /></span>
      ))}
      <span className="h-full w-[72px] border-l-2 border-[#c0c0c0] pl-[4px] text-[23px] leading-[34px] text-[#303030]">总成交</span>
      <span className="w-[84px] text-right text-[21px] font-bold text-[#101010]"><Num v="7506亿" /></span>
      <span className="ml-[5px] h-full border-l-2 border-[#c0c0c0] pl-[8px] text-[18px] leading-[34px] text-[#202020]">平安证券上海上证云行情</span>
    </div>
  );
}

function Watermark() {
  return (
    <div className="absolute left-[1933px] top-[1334px] w-[222px] h-[56px] bg-white flex flex-col items-center justify-center whitespace-nowrap">
      <span className="text-[30px] font-bold leading-[32px] text-[#ee1c10]">股票公式指标网</span>
      <span className="text-[24px] leading-[24px] text-[#f89808]">www.gszx.com.cn</span>
    </div>
  );
}

function App() {
  return (
    <div className="relative w-[2160px] h-[1395px] overflow-hidden flex flex-col bg-black [font-family:'Liberation_Sans','Noto_Sans_CJK_SC',sans-serif]">
      <Titlebar />
      <div className="flex h-[1323px] shrink-0">
        <div className="w-[1787px] shrink-0 flex flex-col border-r-2 border-[#a00000]">
          <Toolbar />
          <div className="relative shrink-0 border-b-2 border-[#a00000] h-[656px]">
            <PriceHeader />
            <PriceChart />
          </div>
          <div className="relative shrink-0 h-[560px]">
            <IndicatorHeader />
            <IndicatorChart />
            <ImeBar />
          </div>
          <DateAxis />
          <TabRows />
        </div>
        <QuotePanel />
        <SideBar />
      </div>
      <StatusBar />
      <Watermark />
    </div>
  );
}

export default App;
